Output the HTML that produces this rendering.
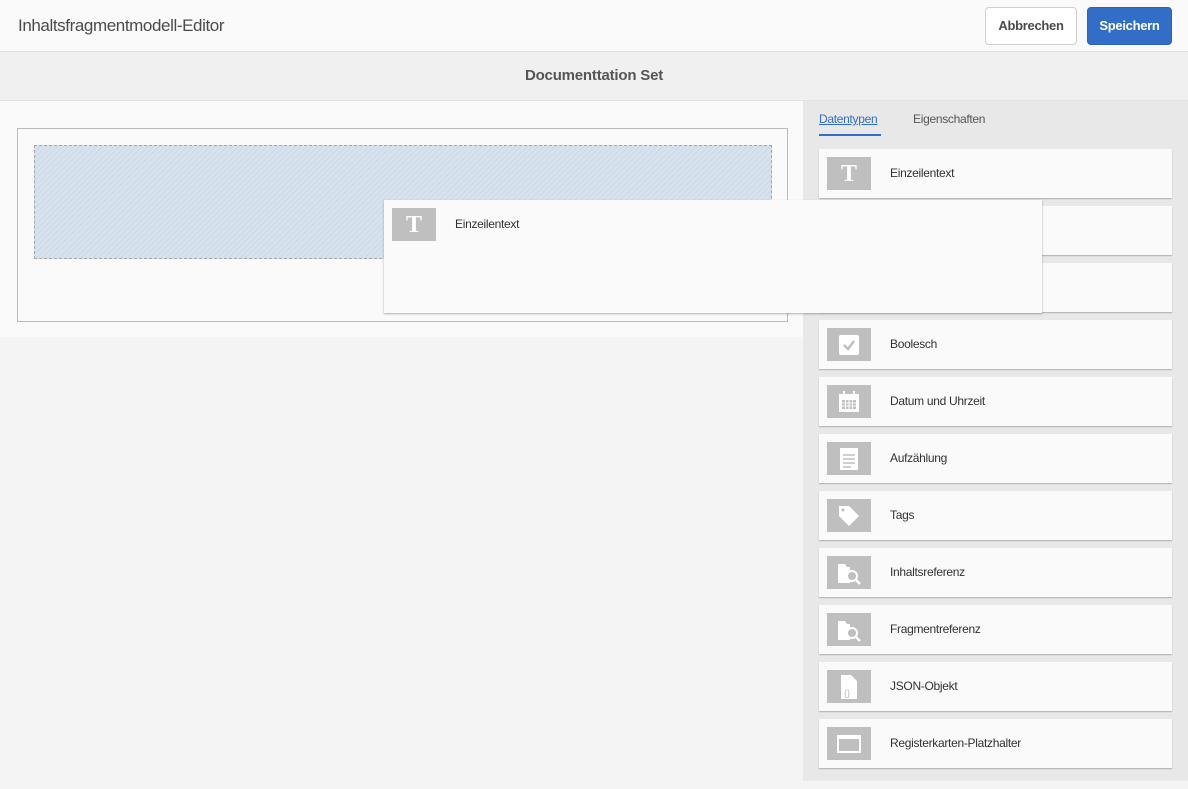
<!DOCTYPE html>
<html><head><meta charset="utf-8"><style>
*{margin:0;padding:0;box-sizing:border-box}
body{width:1188px;height:789px;background:#f4f4f4;font-family:"Liberation Sans",sans-serif;position:relative;overflow:hidden;color:#323232}
.hdr{position:absolute;left:0;top:0;width:1188px;height:52px;background:#fafafa;border-bottom:1px solid #e0e0e0}
.hdr .t{position:absolute;left:18px;top:16px;font-size:17px;color:#4b4b4b;letter-spacing:-0.4px}
.btn{position:absolute;top:7px;height:38px;border-radius:4px;font-size:13px;font-weight:bold;line-height:36px;text-align:center;letter-spacing:-0.3px}
.b1{left:985px;width:92px;border:1px solid #d0d0d0;background:#fff;color:#4b4b4b}
.b2{left:1087px;width:85px;background:#326ec8;color:#fff;border:1px solid #2d62b4}
.sub{position:absolute;left:0;top:52px;width:1188px;height:49px;background:#f0f0f0;border-bottom:1px solid #e2e2e2;text-align:center;line-height:48px;font-size:15px;font-weight:bold;color:#555;letter-spacing:-0.2px}
.left{position:absolute;left:0;top:101px;width:803px;height:236px;background:#fafafa}
.box{position:absolute;left:17px;top:128px;width:771px;height:194px;border:1px solid #bbb;background:#fafafa}
.hatch{position:absolute;left:34px;top:145px;width:738px;height:114px;border:1px dashed #a8a8a8;background:repeating-linear-gradient(-45deg,#d6e2ef 0 3px,#d0d8e2 3px 4px)}
.right{position:absolute;left:803px;top:101px;width:385px;height:680px;background:#e8e8e8}
.tab{position:absolute;top:112px;font-size:12px;letter-spacing:-0.3px}
.card{position:absolute;left:819px;width:353px;height:49px;background:#fafafa;box-shadow:0 1px 1px rgba(0,0,0,.25)}
.ic{position:absolute;left:8px;top:8px;width:44px;height:33px;background:#bfbfbf;display:flex;align-items:center;justify-content:center}
.lbl{position:absolute;left:71px;top:17px;font-size:12px;color:#323232;letter-spacing:-0.3px}
.T{font-family:"Liberation Serif",serif;font-size:24px;font-weight:bold;color:#fff;line-height:1}
.drag{position:absolute;left:384px;top:200px;width:658px;height:113px;background:#fafafa;box-shadow:0 1px 2px rgba(0,0,0,.3)}
</style></head><body>
<div class="hdr"><div class="t">Inhaltsfragmentmodell-Editor</div>
<div class="btn b1">Abbrechen</div><div class="btn b2">Speichern</div></div>
<div class="sub">Documenttation Set</div>
<div class="left"></div>
<div class="box"></div>
<div class="hatch"></div>
<div class="right"></div>
<div class="tab" style="left:819px;color:#326ec8;text-decoration:underline">Datentypen</div>
<div style="position:absolute;left:819px;top:134px;width:62px;height:2px;background:#326ec8"></div>
<div class="tab" style="left:913px;color:#555">Eigenschaften</div>

<div class="card" style="top:149px"><div class="ic"><span class="T">T</span></div><div class="lbl">Einzeilentext</div></div>
<div class="card" style="top:206px"></div>
<div class="card" style="top:263px"></div>
<div class="card" style="top:320px"><div class="ic"><svg width="22" height="22"><rect x="1" y="1" width="20" height="20" rx="2" fill="#fff"/><path d="M6 11l4 4 6-8" stroke="#bfbfbf" stroke-width="2.5" fill="none"/></svg></div><div class="lbl">Boolesch</div></div>
<div class="card" style="top:377px"><div class="ic"><svg width="24" height="22"><rect x="2" y="3" width="20" height="18" fill="#fff"/><rect x="6" y="0" width="2" height="5" fill="#fff"/><rect x="16" y="0" width="2" height="5" fill="#fff"/><g fill="#bfbfbf"><rect x="5" y="9" width="14" height="9"/></g><g stroke="#fff" stroke-width="1"><path d="M5 12h14M5 15h14M8.5 9v9M12 9v9M15.5 9v9"/></g></svg></div><div class="lbl">Datum und Uhrzeit</div></div>
<div class="card" style="top:434px"><div class="ic"><svg width="22" height="24"><rect x="2" y="1" width="18" height="22" fill="#fff"/><path d="M5 8h12M5 12h12M5 16h12M5 20h8" stroke="#bfbfbf" stroke-width="1.5"/></svg></div><div class="lbl">Aufzählung</div></div>
<div class="card" style="top:491px"><div class="ic"><svg width="24" height="24"><path d="M2 2h10l10 10-10 10L2 12z" fill="#fff"/><circle cx="6" cy="6" r="1.5" fill="#bfbfbf"/></svg></div><div class="lbl">Tags</div></div>
<div class="card" style="top:548px"><div class="ic"><svg width="26" height="24"><path d="M2 3h7l2 3h3v16H2z" fill="#fff"/><circle cx="16" cy="15" r="5" fill="#bfbfbf" stroke="#fff" stroke-width="2"/><path d="M19 18l5 5" stroke="#fff" stroke-width="2.5"/></svg></div><div class="lbl">Inhaltsreferenz</div></div>
<div class="card" style="top:605px"><div class="ic"><svg width="26" height="24"><path d="M2 3h7l2 3h3v16H2z" fill="#fff"/><circle cx="16" cy="15" r="5" fill="#bfbfbf" stroke="#fff" stroke-width="2"/><path d="M19 18l5 5" stroke="#fff" stroke-width="2.5"/></svg></div><div class="lbl">Fragmentreferenz</div></div>
<div class="card" style="top:662px"><div class="ic"><svg width="18" height="26"><path d="M1 1h10l6 6v18H1z" fill="#fff"/><text x="4" y="22" font-size="9" fill="#bfbfbf" font-family="Liberation Sans">{}</text></svg></div><div class="lbl">JSON-Objekt</div></div>
<div class="card" style="top:719px"><div class="ic"><svg width="26" height="20"><rect x="1" y="1" width="24" height="18" fill="#fff"/><rect x="3" y="5" width="20" height="12" fill="#bfbfbf"/></svg></div><div class="lbl">Registerkarten-Platzhalter</div></div>

<div class="drag"><div class="ic"><span class="T">T</span></div><div class="lbl" style="top:17px">Einzeilentext</div></div>
</body></html>
